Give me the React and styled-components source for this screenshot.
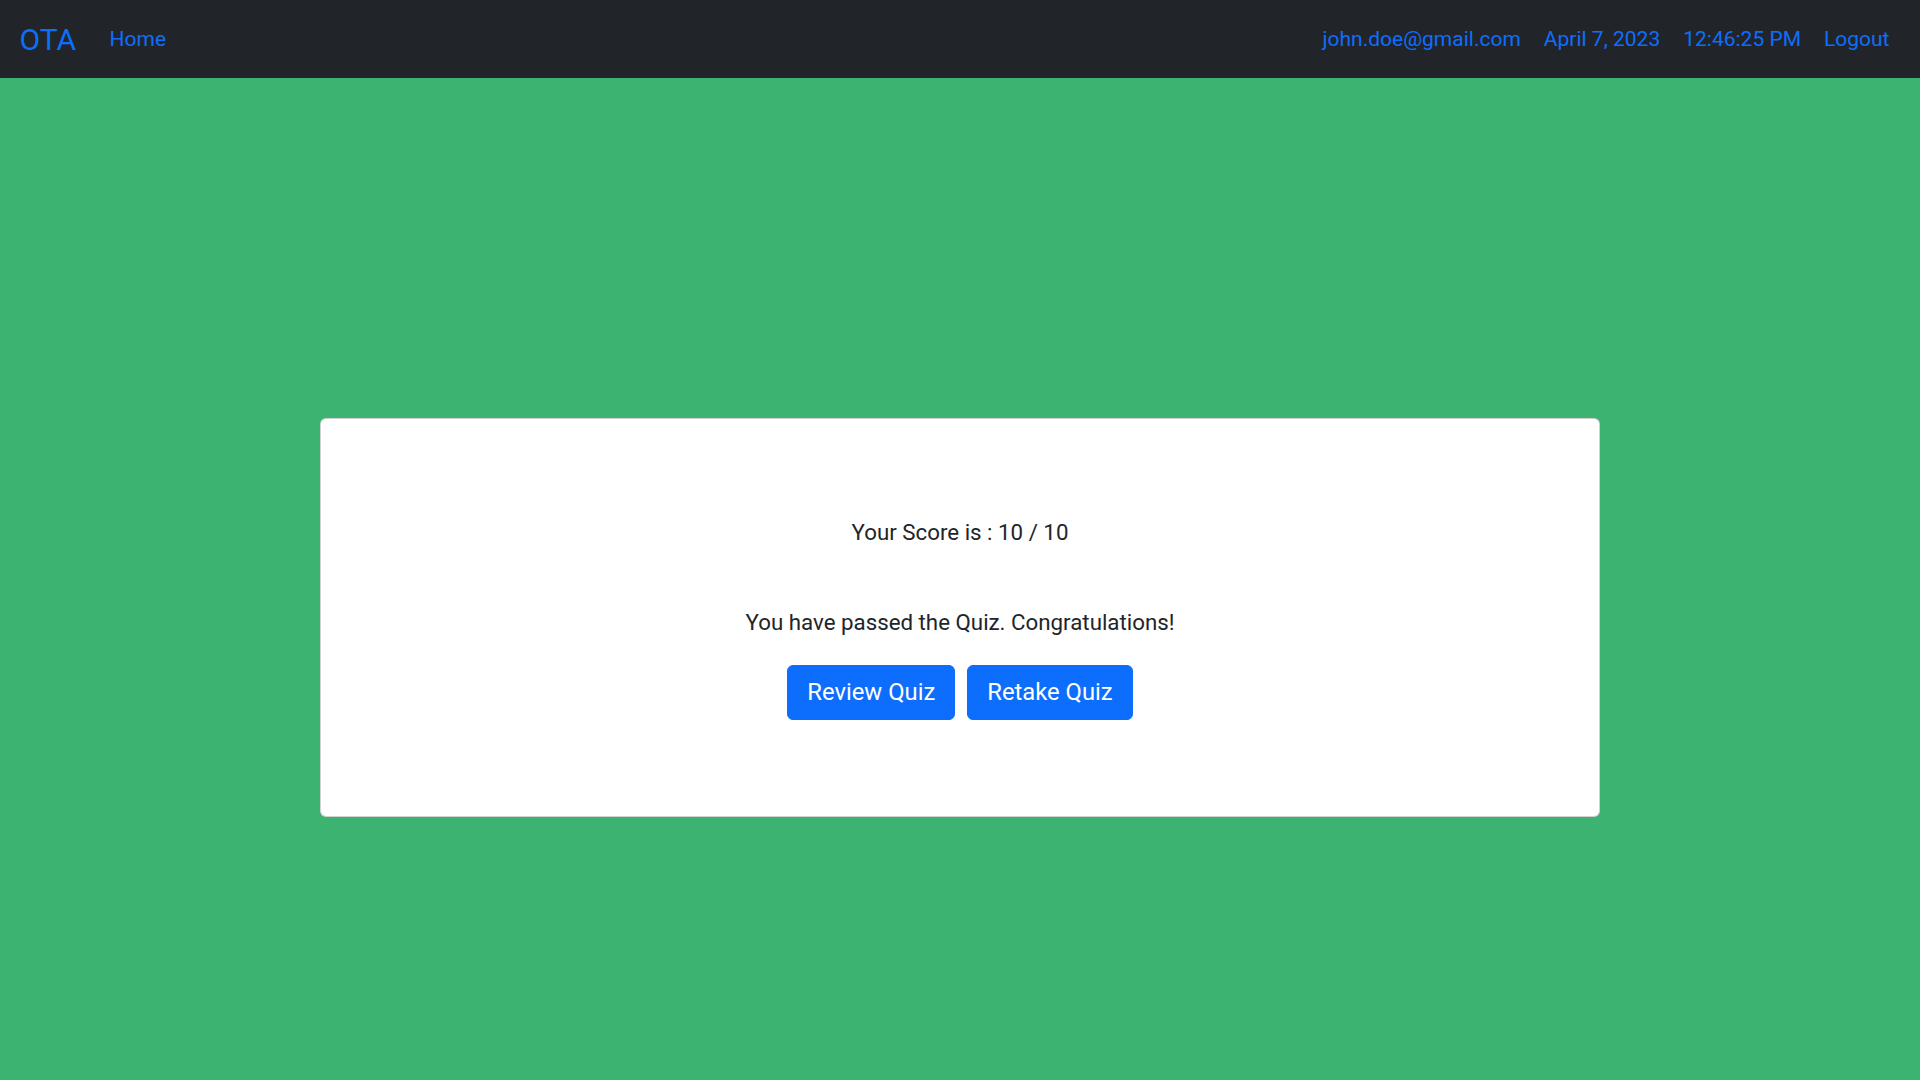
import React from "react";
import styled, { createGlobalStyle } from "styled-components";

const GlobalStyle = createGlobalStyle`
  html, body {
    margin: 0;
    padding: 0;
  }
  body {
    font-family: Roboto, "Liberation Sans", Arial, sans-serif;
    font-size: 22px;
    line-height: 1.5;
    color: #212529;
    background: #3cb371;
  }
  * { box-sizing: border-box; }
`;

const NavBar = styled.nav`
  height: 78px;
  background: #212529;
  display: flex;
  align-items: center;
  justify-content: space-between;
  padding: 0 19px 0 19.5px;
`;

const NavGroup = styled.div`
  display: flex;
  align-items: center;
`;

const Brand = styled.a`
  font-size: 30px;
  line-height: 41px;
  color: #0d6efd;
  text-decoration: none;
  margin-right: 22px;
`;

const NavLink = styled.a`
  font-size: 21px;
  line-height: 33px;
  color: #0d6efd;
  text-decoration: none;
  padding: 0 11.5px;
  cursor: pointer;
`;

const Main = styled.main`
  min-height: calc(100vh - 2px);
  display: flex;
  align-items: center;
  justify-content: center;
`;

const Card = styled.section`
  width: 1280px;
  background: #fff;
  border: 1px solid rgba(0, 0, 0, 0.175);
  border-radius: 6px;
  padding: 97px 16px 96px;
  display: flex;
  flex-direction: column;
  align-items: center;
  text-align: center;
`;

const Line = styled.p`
  margin: 0 0 ${(p) => p.$gap}px;
  font-size: 22.3px;
  line-height: 33px;
`;

const Actions = styled.div`
  display: flex;
  gap: 12px;
`;

const Button = styled.button`
  font-family: inherit;
  font-size: 23.8px;
  line-height: 36px;
  padding: 8.5px 19px;
  color: #fff;
  background: #0d6efd;
  border: 1px solid #0d6efd;
  border-radius: 6px;
  cursor: pointer;
`;

export default function App() {
  return (
    <>
      <GlobalStyle />
      <NavBar>
        <NavGroup>
          <Brand href="#">OTA</Brand>
          <NavLink>Home</NavLink>
        </NavGroup>
        <NavGroup>
          <NavLink>john.doe@gmail.com</NavLink>
          <NavLink>April 7, 2023</NavLink>
          <NavLink>12:46:25 PM</NavLink>
          <NavLink>Logout</NavLink>
        </NavGroup>
      </NavBar>
      <Main>
        <Card>
          <Line $gap={57}>Your Score is : 10 / 10</Line>
          <Line $gap={26}>You have passed the Quiz. Congratulations!</Line>
          <Actions>
            <Button>Review Quiz</Button>
            <Button>Retake Quiz</Button>
          </Actions>
        </Card>
      </Main>
    </>
  );
}
